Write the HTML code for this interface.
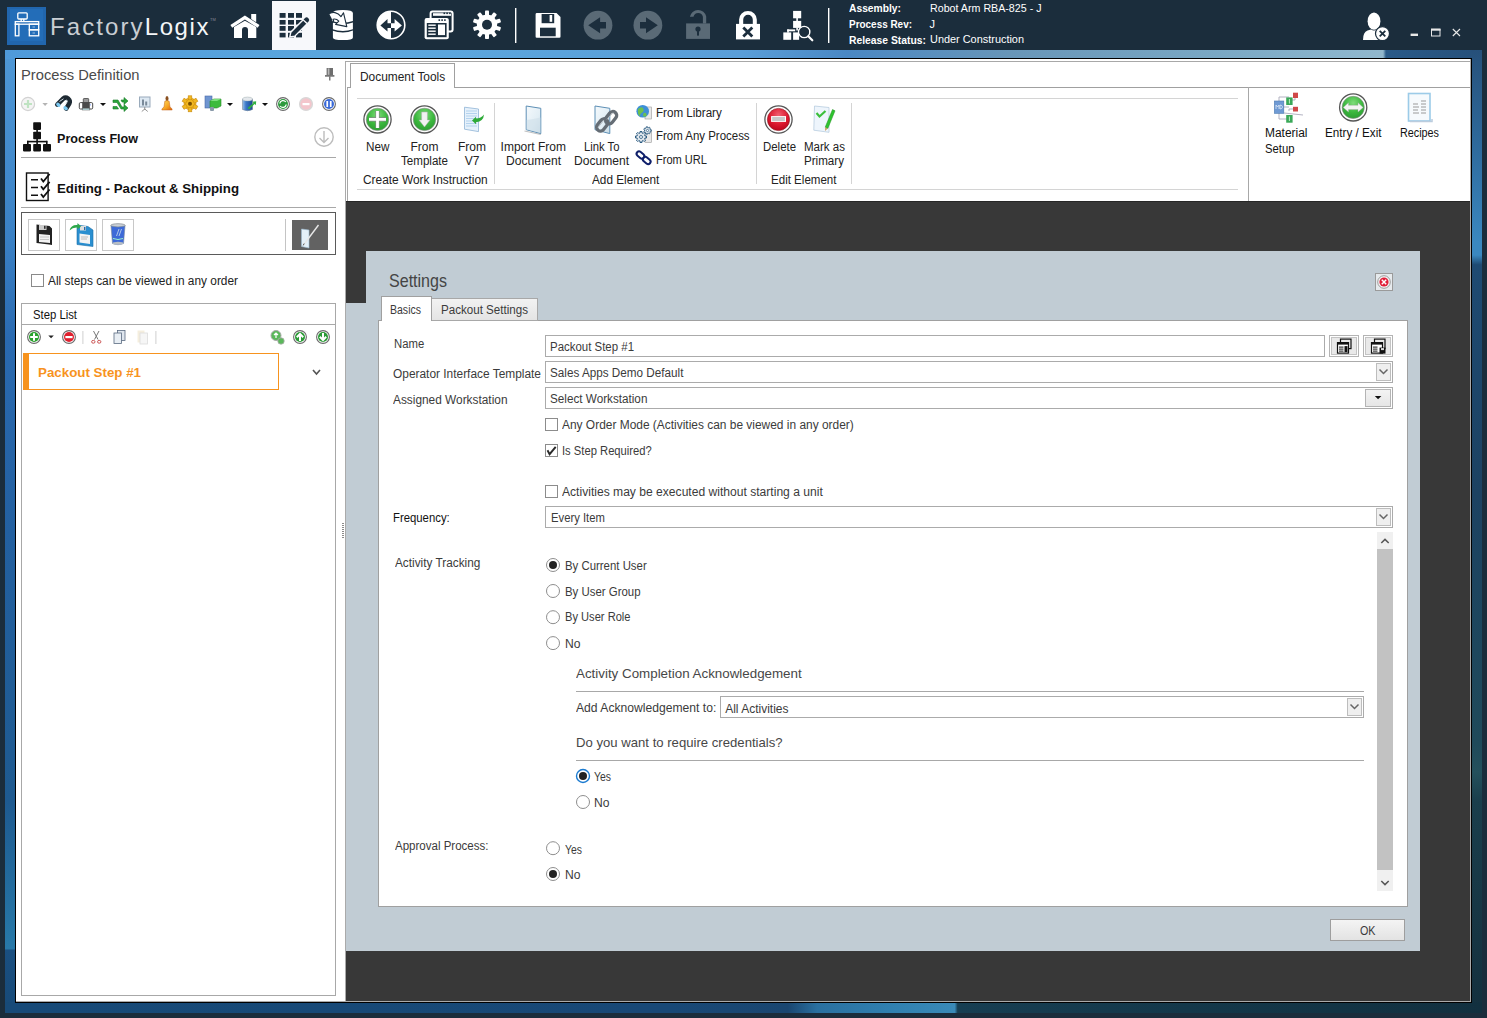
<!DOCTYPE html>
<html><head><meta charset="utf-8">
<style>
*{margin:0;padding:0;box-sizing:border-box}
html,body{width:1487px;height:1018px;overflow:hidden;background:#1b2d3c;font-family:"Liberation Sans",sans-serif;font-size:12px;color:#333;position:relative}
.a{position:absolute}
.t{position:absolute;white-space:nowrap;line-height:1}
svg{position:absolute;overflow:visible}
</style></head><body>
<div class="a" style="left:5px;top:50px;width:1477px;height:963px;background:#1d5388"></div>
<div class="a" style="left:5px;top:50px;width:10px;height:963px;background:linear-gradient(180deg,#4f98d6 0%,#3a80c4 20%,#2a6ab0 30%,#2360a0 50%,#1e5a90 78%,#2676a6 92%,#2878a8 93.3%,#1a4f80 93.5%,#174a78 100%)"></div>
<div class="a" style="left:5px;top:50px;width:1477px;height:9px;background:linear-gradient(90deg,#4f9ada 0%,#5ca8de 25%,#5a9ed8 50%,#4a88c4 57%,#6896b8 68%,#7aa8c4 82%,#8ab4cc 90%,#92b8cd 93.3%,#2a5a88 93.5%,#26507a 100%)"></div>
<div class="a" style="left:1471px;top:50px;width:11px;height:963px;background:linear-gradient(180deg,#26507a 0%,#2e6a9c 10%,#3a88c0 20%,#3a88c0 21.3%,#1e4a72 22.3%,#1c4262 46%,#1f4a5a 72%,#24505c 75%,#1a3e4c 78%,#14303e 100%)"></div>
<div class="a" style="left:5px;top:1002px;width:1477px;height:11px;background:linear-gradient(90deg,#174a78 0%,#184876 45%,#1a4670 53%,#2a70a0 55%,#3080b0 60%,#3a8ab8 64.3%,#173e52 64.5%,#14384a 80%,#12303f 100%)"></div>
<div class="a" style="left:15px;top:58px;width:1457px;height:945px;border:1px solid #000;background:#383838"></div>
<div class="a" style="left:16px;top:59px;width:1455px;height:943px;border-right:1px solid #aaa;border-bottom:1px solid #aaa"></div>
<div class="a" style="left:16px;top:59px;width:330px;height:942px;background:#fff"></div>
<div class="a" style="left:345px;top:61px;width:1px;height:940px;background:#aaa"></div>
<!-- TOPBAR -->
<div class="a" style="left:7px;top:7px;width:39px;height:38px;background:#2166ae"></div>
<div class="a" style="left:10px;top:9px;width:33px;height:32px;background:#236db8"></div>
<svg style="left:0;top:0" width="60" height="50">
 <g fill="none" stroke="#fff" stroke-width="1.3">
  <rect x="17.8" y="12.8" width="9.4" height="6.2" rx="1"/>
  <path d="M21.2 19v2.3M23.8 19v2.3"/>
  <rect x="15.3" y="21.6" width="23.4" height="2.6"/>
  <rect x="15.3" y="24.2" width="3.6" height="11.6"/>
  <rect x="29.3" y="24.2" width="9.4" height="5.6"/>
  <rect x="29.3" y="29.8" width="9.4" height="6"/>
 </g>
 <path d="M32.5 27h2.5M32.5 33h2.5" stroke="#fff" stroke-width="0.8" opacity=".7"/>
</svg>
<div class="t" style="left:50px;top:15px;font-size:24px;color:#c9ced3;letter-spacing:2.1px;font-weight:400"><span>Factory</span><span style="color:#f4f6f8;letter-spacing:1.6px">Logix</span></div>
<div class="t" style="left:210px;top:18px;font-size:4px;color:#889">TM</div>
<!-- home -->
<svg style="left:0;top:0" width="1487" height="50">
 <path d="M230.4 25.1 L244.9 15.5 L259.5 25.1 L257.7 27.8 L244.9 19.4 L232.2 27.8Z" fill="#fff"/>
 <path d="M251.2 13.9 H256.2 V22.3 L251.2 19Z" fill="#fff"/>
 <path d="M234 27 L244.9 20.8 L256.3 27 V37.9 H248 V30 A3 3 0 0 0 242 30 V37.9 H234Z" fill="#fff"/>
 <!-- selected tab -->
 <rect x="272" y="1" width="44" height="49" fill="#f7f8fb"/>
 <g fill="#1c2e3d">
  <rect x="279.6" y="13" width="6" height="4.8"/><rect x="288" y="13" width="6" height="4.8"/><rect x="296" y="13" width="6" height="4.8"/>
  <rect x="279.6" y="20" width="6" height="4.6"/><rect x="288" y="20" width="6" height="4.6"/><rect x="296" y="20" width="6" height="4.6"/>
  <rect x="279.6" y="26" width="6" height="4.8"/><rect x="288" y="26" width="6" height="4.8"/><rect x="296" y="26" width="6" height="4.8"/>
  <rect x="279.6" y="32.8" width="6" height="4.6"/><rect x="288" y="32.8" width="6" height="4.6"/><rect x="296" y="32.8" width="6" height="4.6"/>
 </g>
 <path d="M289.8 37 L290.8 32.2 L303.2 19.8 L307.2 23.8 L294.8 36.2Z" fill="#1c2e3d" stroke="#f7f8fb" stroke-width="1.4"/>
 <path d="M303.6 19.4 L304.8 18.2 A2.2 2.2 0 0 1 308.4 21.8 L307.4 22.8Z" fill="#1c2e3d"/>
 <!-- db -->
 <g fill="#fff">
  <path d="M332.9 13 Q332.9 10.1 342.9 10.1 Q352.9 10.1 352.9 13 V21 Q348 22.8 342.9 22.8 Q336 22.8 332.9 21Z"/>
  <path d="M332.9 22.6 Q337 24.2 342.9 24.2 Q348.5 24.2 352.9 22.4 V29.2 Q348 31 342.9 31 Q337 31 332.9 29.2Z"/>
  <path d="M332.9 30.8 Q337 32.6 342.9 32.6 Q348.5 32.6 352.9 30.6 V37.4 Q352.9 40 342.9 40 Q332.9 40 332.9 37.4Z"/>
 </g>
 <path d="M328.8 14.2 Q330.5 12 335 12.6 Q338.5 13.2 341 16.6 L343.5 12.8 L346.8 26.6 L335.6 24.4 L338.8 21.2 Q336.5 18.5 333 19.2 Q334.5 21.5 332.6 22.6 Q331.5 18.5 328.8 14.2Z" fill="#fff" stroke="#1c2e3d" stroke-width="1.1" stroke-linejoin="round"/>
 <!-- circle arrows -->
 <circle cx="391" cy="25" r="13.8" fill="#1c2e3d" stroke="#fff" stroke-width="1.6"/>
 <path d="M391 11.2 A13.8 13.8 0 0 0 391 38.8Z" fill="#fff"/>
 <path d="M380.4 25.4 L387.5 18.9 V23.2 H391 V28 H387.5 V31.6Z" fill="#1c2e3d"/>
 <path d="M401.9 25.4 L394.6 18.9 V23.2 H391 V28 H394.6 V31.6Z" fill="#fff"/>
 <!-- windows -->
 <rect x="430.6" y="11.5" width="22" height="20" rx="2" fill="none" stroke="#fff" stroke-width="2"/>
 <path d="M433 14.5h18" stroke="#fff" stroke-width="2.6"/>
 <rect x="424.6" y="18" width="24.2" height="21.3" rx="2" fill="#fff"/>
 <rect x="426.8" y="23" width="19.8" height="14.2" fill="#1c2e3d"/>
 <g fill="#fff"><rect x="428.3" y="24.5" width="7.4" height="1.4"/><rect x="428.3" y="27.5" width="7.4" height="1.4"/><rect x="428.3" y="30.5" width="7.4" height="1.4"/><rect x="428.3" y="33.5" width="7.4" height="1.4"/><rect x="438" y="24.5" width="7" height="10.6"/></g>
 <g fill="#1c2e3d"><rect x="438.5" y="19.3" width="1.6" height="1.6"/><rect x="441.3" y="19.3" width="1.6" height="1.6"/><rect x="444.1" y="19.3" width="1.6" height="1.6"/></g>
 <g fill="#1c2e3d"><rect x="443.5" y="12.5" width="1.6" height="1.6"/><rect x="446.3" y="12.5" width="1.6" height="1.6"/><rect x="449.1" y="12.5" width="1.6" height="1.6"/></g>
 <!-- gear -->
 <g transform="translate(487,24.8)" fill="#fff">
  <circle r="10.2"/>
  <g id="teeth"><rect x="-2" y="-14.2" width="4" height="6" rx="0.8"/></g>
  <rect x="-2" y="-14.2" width="4" height="6" rx="0.8" transform="rotate(36)"/>
  <rect x="-2" y="-14.2" width="4" height="6" rx="0.8" transform="rotate(72)"/>
  <rect x="-2" y="-14.2" width="4" height="6" rx="0.8" transform="rotate(108)"/>
  <rect x="-2" y="-14.2" width="4" height="6" rx="0.8" transform="rotate(144)"/>
  <rect x="-2" y="-14.2" width="4" height="6" rx="0.8" transform="rotate(180)"/>
  <rect x="-2" y="-14.2" width="4" height="6" rx="0.8" transform="rotate(216)"/>
  <rect x="-2" y="-14.2" width="4" height="6" rx="0.8" transform="rotate(252)"/>
  <rect x="-2" y="-14.2" width="4" height="6" rx="0.8" transform="rotate(288)"/>
  <rect x="-2" y="-14.2" width="4" height="6" rx="0.8" transform="rotate(324)"/>
  <circle r="5" fill="#1c2e3d"/>
 </g>
 <rect x="515" y="8" width="1.4" height="35" fill="#fff"/>
 <!-- save -->
 <path d="M536.5 13 H556.5 L560.5 17 V36.5 A1.2 1.2 0 0 1 559.3 37.8 H536.8 A1.2 1.2 0 0 1 535.6 36.5 V14.2 A1.2 1.2 0 0 1 536.5 13Z" fill="#fff"/>
 <rect x="541.6" y="14" width="12.6" height="9.2" fill="#1c2e3d"/>
 <rect x="549.6" y="15" width="2.6" height="6.8" fill="#fff"/>
 <rect x="540" y="27.7" width="15.7" height="8.6" fill="#1c2e3d"/>
 <!-- back/forward -->
 <circle cx="598" cy="25.2" r="14.4" fill="#5a6a76"/>
 <path d="M588.2 25.2 L600.1 17.2 V22.1 H606 V28.4 H600.1 V33.2Z" fill="#1c2e3d"/>
 <circle cx="647.9" cy="25.2" r="14.4" fill="#5a6a76"/>
 <path d="M657.8 25.2 L646 17.2 V22.1 H640 V28.4 H646 V33.2Z" fill="#1c2e3d"/>
 <!-- open lock -->
 <rect x="686.1" y="23.4" width="23.9" height="15.5" fill="#5a6a76"/>
 <path d="M689.9 16.8 H693.5 A4.8 4.8 0 0 1 702.9 16.8 V23.5 H706.2 V16.6 A8.3 8.3 0 0 0 689.9 16.8Z" fill="#5a6a76"/>
 <circle cx="698" cy="29" r="2.6" fill="#1c2e3d"/><rect x="697" y="29" width="2" height="6.6" fill="#1c2e3d"/>
 <!-- lock x -->
 <rect x="736" y="23.9" width="24" height="15.5" fill="#fff"/>
 <path d="M739.1 24 V19.4 A8.85 8.5 0 0 1 756.8 19.4 V24 H752.8 V19.8 A4.8 5 0 0 0 743.2 19.8 V24Z" fill="#fff"/>
 <path d="M743.3 27.5 L752.3 36.5 M752.3 27.5 L743.3 36.5" stroke="#1c2e3d" stroke-width="2.8"/>
 <!-- hierarchy search -->
 <g fill="#fff">
  <rect x="793.1" y="10.9" width="8.1" height="7.4"/>
  <rect x="796.3" y="18" width="1.6" height="3"/>
  <rect x="793.1" y="20.9" width="8.1" height="7"/>
  <rect x="796.3" y="27.5" width="1.6" height="3"/>
  <rect x="787.2" y="29.4" width="8" height="1.9"/>
  <rect x="787.2" y="29.4" width="1.6" height="3.2"/>
  <rect x="783.3" y="32.4" width="7.9" height="7.4"/>
  <rect x="793.1" y="32.4" width="6" height="7.4"/>
 </g>
 <circle cx="804.2" cy="32" r="5.6" fill="#1c2e3d" stroke="#fff" stroke-width="1.5"/>
 <circle cx="804.2" cy="32" r="4.2" fill="none" stroke="#1c2e3d" stroke-width="1.2"/>
 <path d="M808.3 36.2 L812.3 40.3" stroke="#fff" stroke-width="2.2" stroke-linecap="round"/>
 <rect x="828" y="8" width="1.4" height="35" fill="#fff"/>
 <!-- user -->
 <ellipse cx="1374" cy="21.2" rx="6.4" ry="8.6" fill="#fff"/>
 <path d="M1363 40 Q1363 32 1367.5 30.5 L1371 29.5 Q1374 31.5 1377 29.5 L1382 31 L1382 40Z" fill="#fff"/>
 <circle cx="1382.5" cy="33.6" r="7" fill="#fff" stroke="#1c2e3d" stroke-width="1.2"/>
 <path d="M1379.7 30.8 L1385.3 36.4 M1385.3 30.8 L1379.7 36.4" stroke="#1c2e3d" stroke-width="1.8"/>
 <!-- window controls -->
 <rect x="1410.6" y="33.6" width="7.4" height="2.4" fill="#e8e8e8"/>
 <rect x="1431.5" y="29.2" width="8.5" height="6.8" fill="none" stroke="#e8e8e8" stroke-width="1"/>
 <rect x="1431" y="28.7" width="9.5" height="2" fill="#e8e8e8"/>
 <path d="M1452.8 29 L1460 36 M1460 29 L1452.8 36" stroke="#e8e8e8" stroke-width="1.1"/>
</svg>

<svg style="left:0;top:0" width="346" height="400">
 <rect x="326.6" y="68" width="6.4" height="7.2" fill="#6e6e6e"/><rect x="327.8" y="68.4" width="1.6" height="6.4" fill="#b8b8b8"/>
 <rect x="325" y="75.2" width="9.4" height="1.4" fill="#5a5a5a"/><rect x="329.2" y="76.5" width="1.2" height="4" fill="#5a5a5a"/>
 <!-- toolbar -->
 <circle cx="28" cy="104" r="6.6" fill="#f4f4f4" stroke="#d2d2d2" stroke-width="1.2"/>
 <path d="M28 100v8M24 104h8" stroke="#bfe3c2" stroke-width="2.2"/>
 <path d="M42.4 103h5.4l-2.7 3z" fill="#b4b4b4"/>
 <path d="M57.3 104.6 L63.2 98.6 Q65.5 96.8 68.2 98.6 Q70.6 100.8 69.3 103.5 L66.2 108.6" fill="none" stroke="#1e2a33" stroke-width="4.6" stroke-linecap="round" stroke-linejoin="round"/>
 <path d="M59.5 101.5 L63.5 98.8 M66 99.8 L68 101.5 M65.8 103.5 L67 102" stroke="#c8d4dc" stroke-width="1" fill="none"/>
 <ellipse cx="58.3" cy="104.8" rx="2.4" ry="1.8" transform="rotate(45 58.3 104.8)" fill="#7cc8f0"/>
 <ellipse cx="65.6" cy="108.2" rx="2.4" ry="1.8" transform="rotate(30 65.6 108.2)" fill="#7cc8f0"/>
 <g transform="translate(79,98)">
  <rect x="4.3" y="0.5" width="5.4" height="5" rx=".8" fill="#9a9a9a" stroke="#444" stroke-width=".8"/>
  <rect x="0.3" y="4.6" width="13.4" height="6.4" rx="1.2" fill="#fff" stroke="#333" stroke-width=".9"/>
  <rect x="3.2" y="4.4" width="7.6" height="6.8" fill="#4a4a4a"/>
  <rect x="3.2" y="10.2" width="7.6" height="1.8" fill="#c8f0f4" stroke="#555" stroke-width=".5"/>
  <rect x="11" y="6.5" width=".8" height=".8" fill="#36f"/>
 </g>
 <path d="M100 103h6l-3 3z" fill="#111"/>
 <g transform="translate(113,97)" fill="#2aa53a" stroke="#1a7a28" stroke-width=".6">
  <path d="M0 3 H5 L9 10 H11 V7.5 L15 11 L11 14.5 V12 H8 L4 5.5 H0Z"/>
  <path d="M0 9.5 H4 L5.5 12 H0Z"/><path d="M8 3 H11 V0.5 L15 4 L11 7.5 V5 H9Z"/>
 </g>
 <g transform="translate(139,96.5)">
  <rect x="0.5" y="0.5" width="10.5" height="10" fill="#dde8f2" stroke="#9ab" stroke-width="1"/>
  <rect x="3" y="3" width="2" height="6" fill="#7a8a9a"/><rect x="6.2" y="5" width="2" height="4" fill="#7a8a9a"/>
  <path d="M5.75 10.5v3M5.75 12.5l-3 2.5M5.75 12.5l3 2.5" stroke="#888" stroke-width=".9"/>
 </g>
 <g transform="translate(162,96)">
  <defs><linearGradient id="bellG" x1="0" y1="0" x2="1" y2="1"><stop offset="0" stop-color="#ffe060"/><stop offset=".6" stop-color="#f5a020"/><stop offset="1" stop-color="#d86010"/></linearGradient></defs>
  <ellipse cx="5" cy="2.6" rx="1.5" ry="2.6" fill="#8a5020"/>
  <path d="M2.8 5.2 Q5 4 7.2 5.2 L8 11 Q10.4 12.5 10.2 14 H-0.2 Q-0.4 12.5 2 11Z" fill="url(#bellG)" stroke="#c06018" stroke-width=".5"/>
 </g>
 <g transform="translate(190,103.8)">
  <g fill="#f2b820" stroke="#c98a10" stroke-width=".6">
   <circle r="6"/>
   <rect x="-1.8" y="-8" width="3.6" height="4" transform="rotate(0)"/><rect x="-1.8" y="-8" width="3.6" height="4" transform="rotate(60)"/><rect x="-1.8" y="-8" width="3.6" height="4" transform="rotate(120)"/><rect x="-1.8" y="-8" width="3.6" height="4" transform="rotate(180)"/><rect x="-1.8" y="-8" width="3.6" height="4" transform="rotate(240)"/><rect x="-1.8" y="-8" width="3.6" height="4" transform="rotate(300)"/>
  </g>
  <circle r="2" fill="#7a5000"/>
 </g>
 <g transform="translate(205,96)">
  <rect x="0" y="0" width="7" height="12" fill="#6f95d0" stroke="#4a6aa8" stroke-width=".6"/>
  <path d="M5 5 L9 3 H16 V10 L12 12 H5Z" fill="#3dbb3d" stroke="#2a8a2a" stroke-width=".6"/>
  <path d="M5 5 L9 3 H16 L12 5Z" fill="#7ee07e"/>
  <rect x="5" y="11" width="4" height="4" rx="1" fill="#8a9aaa"/>
 </g>
 <path d="M227 103h6l-3 3z" fill="#111"/>
 <g transform="translate(242,96.5)">
  <defs><linearGradient id="dbG" x1="0" y1="0" x2="1" y2="0"><stop offset="0" stop-color="#9ac0e8"/><stop offset=".35" stop-color="#3a78c8"/><stop offset="1" stop-color="#1a4a90"/></linearGradient></defs>
  <path d="M0.5 2.5 Q5.5 0 10.5 2.5 V13 Q5.5 15.5 0.5 13Z" fill="url(#dbG)" stroke="#6a7a8a" stroke-width=".5"/>
  <ellipse cx="5.5" cy="2.5" rx="5" ry="2" fill="#e4e8ec" stroke="#9aa" stroke-width=".4"/>
  <path d="M5.5 11.5 L11.5 6.5 L10.3 5.2 L14.2 4.8 L13.8 8.7 L12.6 7.5 L7 12.8Z" fill="#30b040"/>
 </g>
 <path d="M262 103h6l-3 3z" fill="#111"/>
 <circle cx="283" cy="104" r="6.4" fill="#fff" stroke="#6a6a6a" stroke-width="1.1"/><circle cx="283" cy="104" r="5" fill="#2e9a3e"/>
 <path d="M279.8 103.5 A3.3 3.3 0 0 1 285.8 102 M286.2 104.5 A3.3 3.3 0 0 1 280.2 106" stroke="#fff" stroke-width="1.3" fill="none"/>
 <circle cx="306" cy="104" r="6.4" fill="#f3c6cc" stroke="#d8d8d8" stroke-width="1.4"/>
 <rect x="302.5" y="103" width="7" height="2.2" fill="#fff"/>
 <circle cx="329" cy="104" r="6.4" fill="#fff" stroke="#6a6a6a" stroke-width="1.1"/><circle cx="329" cy="104" r="5" fill="#3a6ad8"/>
 <rect x="326.4" y="101" width="1.7" height="6" fill="#fff"/><rect x="329.9" y="101" width="1.7" height="6" fill="#fff"/>
 <!-- process flow icon -->
 <g fill="#111">
  <rect x="33.2" y="122.3" width="7.8" height="7.6" rx=".8"/>
  <rect x="33.2" y="131.7" width="7.8" height="7.6" rx=".8"/>
  <rect x="36.3" y="129" width="1.6" height="3"/>
  <rect x="36.3" y="139" width="1.6" height="2"/>
  <rect x="27" y="140.8" width="20.2" height="1.6"/>
  <rect x="27" y="140.8" width="1.6" height="3.5"/><rect x="46" y="140.8" width="1.6" height="3.5"/><rect x="36.3" y="140.8" width="1.6" height="3.5"/>
  <rect x="23" y="144" width="8" height="7.4" rx=".8"/>
  <rect x="33.2" y="144" width="7.8" height="7.4" rx=".8"/>
  <rect x="43" y="144" width="8" height="7.4" rx=".8"/>
 </g>
 <circle cx="324" cy="137" r="9.2" fill="none" stroke="#bdbdbd" stroke-width="1.4"/>
 <path d="M324 131v11.5M319.5 138l4.5 4.5 4.5-4.5" fill="none" stroke="#bdbdbd" stroke-width="1.4"/>
 <!-- checklist icon -->
 <rect x="26.5" y="173" width="21.6" height="27.5" fill="#fff" stroke="#111" stroke-width="1.4"/>
 <g stroke="#111" stroke-width="1.6" fill="none">
  <path d="M31 179.7h7M31 187.5h7M31 195.2h7"/>
  <path d="M41 178.5l2.3 3 6.3-7.5M41 186.3l2.3 3 6.3-7.5M41 194l2.3 3 6.3-7.5" stroke-width="1.8"/>
 </g>
</svg>
<div class="a" style="left:21px;top:157px;width:315px;height:1px;background:#a8a8a8"></div>
<div class="a" style="left:21px;top:207px;width:315px;height:1px;background:#a8a8a8"></div>
<div class="a" style="left:21px;top:212px;width:315px;height:43px;border:1px solid #5a5a5a"></div>
<div class="a" style="left:28px;top:219px;width:32px;height:32px;border:1px solid #c8c8c8;background:#fff"></div>
<div class="a" style="left:65px;top:219px;width:32px;height:32px;border:1px solid #c8c8c8;background:#fff"></div>
<div class="a" style="left:102px;top:219px;width:32px;height:32px;border:1px solid #c8c8c8;background:#fff"></div>
<div class="a" style="left:285px;top:219px;width:1px;height:32px;background:#c4c4c4"></div>
<div class="a" style="left:292px;top:220px;width:36px;height:30px;background:#626262"></div>
<svg style="left:0;top:0" width="346" height="300">
 <!-- floppy black -->
 <path d="M36.5 224.5 L49.5 226 L52 228.5 V245 L49 244.5 L36.5 243Z" fill="#222"/>
 <path d="M39 225 H46.5 V230 H39Z" fill="#ccc"/><rect x="44" y="225.8" width="1.6" height="3" fill="#333"/>
 <path d="M39 234 L50 235 V243 L39 242Z" fill="#f2f2f2"/>
 <path d="M40 237h9M40 239.5h9" stroke="#aaa" stroke-width=".6"/>
 <!-- floppy blue with arrow -->
 <path d="M77 225 L88 226.5 L93 230 V246.5 L77 244.5Z" fill="#2a8fd0" stroke="#1d6ea8" stroke-width=".6"/>
 <path d="M80 226 H86 V230.5 H80Z" fill="#ddd"/><rect x="84" y="227" width="1.4" height="3" fill="#2a6aa8"/>
 <path d="M79.5 233.5 L90 235 V244 L79.5 242.5Z" fill="#f4f4f4"/>
 <path d="M81 237h7M81 239h6" stroke="#999" stroke-width=".6"/>
 <path d="M69.5 230.5 Q71 224.5 77.5 225 L77.5 223 L81 226.5 L77.5 229.5 V227.5 Q73 227 69.5 230.5Z" fill="#2ea84a"/>
 <!-- trash -->
 <ellipse cx="118" cy="225.5" rx="7.3" ry="1.8" fill="#c9cfd6" stroke="#8a9097" stroke-width=".8"/>
 <path d="M111 226 L112.5 243.5 Q118 246 123.5 243.5 L125 226 Q118 228 111 226Z" fill="#3d6ad8" stroke="#7a8a9a" stroke-width=".6"/>
 <path d="M116.5 236 L119 229 M119 236 L121.5 229" stroke="#cde" stroke-width=".8"/>
 <path d="M113 238.5 Q118 240.5 123 238.5" stroke="#9ec" stroke-width="1" fill="none"/>
 <ellipse cx="118" cy="243.3" rx="5.3" ry="1.5" fill="#b8bec4"/>
 <!-- edit doc on dark -->
 <path d="M301.5 229 L309 230 V248 L301.5 246.5Z" fill="#e4f0f8" stroke="#9ab8cf" stroke-width=".6"/>
 <path d="M303.5 245 L318.5 225" stroke="#e8e8e8" stroke-width="1.4"/>
 <path d="M303.2 245.4 L304.2 243.5" stroke="#555" stroke-width="1"/>
</svg>
<div class="a" style="left:31px;top:274px;width:13px;height:13px;border:1px solid #8a8a8a;background:#fff"></div>
<div class="a" style="left:21px;top:303px;width:315px;height:693px;border:1px solid #a8a8a8"></div>
<div class="a" style="left:21px;top:324px;width:315px;height:1px;background:#a8a8a8"></div>
<svg style="left:0;top:0" width="346" height="400">
 <circle cx="34" cy="337" r="6.4" fill="#fff" stroke="#6a6a6a" stroke-width="1.1"/><circle cx="34" cy="337" r="5" fill="#2aa02e"/>
 <path d="M34 333.2v7.6M30.2 337h7.6" stroke="#fff" stroke-width="2"/>
 <path d="M48.3 335.4h5.5l-2.75 2.8z" fill="#222"/>
 <circle cx="69" cy="337" r="6.4" fill="#fff" stroke="#6a6a6a" stroke-width="1.1"/><circle cx="69" cy="337" r="5" fill="#e0202e"/>
 <rect x="65.4" y="336" width="7.2" height="2.2" fill="#fff"/>
 <rect x="82.4" y="331" width="1" height="13" fill="#d0d0d0"/>
 <path d="M93.5 331 L98 339.5 M99 331 L94.5 339.5" stroke="#777" stroke-width="1"/>
 <ellipse cx="93.3" cy="341.8" rx="1.7" ry="1.4" fill="none" stroke="#c55" stroke-width="1"/><ellipse cx="99.2" cy="341.8" rx="1.7" ry="1.4" fill="none" stroke="#c55" stroke-width="1"/>
 <rect x="117.5" y="330.5" width="7.5" height="10" fill="#dfe6ee" stroke="#5a6a80" stroke-width=".8"/>
 <rect x="114" y="333" width="7.5" height="10.5" fill="#e8eef4" stroke="#5a6a80" stroke-width=".8"/>
 <rect x="137.5" y="330.5" width="7" height="12" fill="#f3ead6" opacity=".8"/>
 <rect x="140" y="333" width="7.5" height="11" fill="#f6f6f6" stroke="#ddd" stroke-width=".8"/>
 <rect x="155.4" y="331" width="1" height="13" fill="#d0d0d0"/>
 <circle cx="276" cy="335.5" r="5" fill="#5ab85a" stroke="#aaa" stroke-width="1"/><path d="M276 333v5M274 335l2-2 2 2" stroke="#fff" stroke-width="1.2" fill="none"/>
 <circle cx="281" cy="341" r="3.2" fill="#5ab85a" stroke="#aaa" stroke-width=".8"/>
 <circle cx="300" cy="337" r="6.4" fill="#fff" stroke="#6a6a6a" stroke-width="1.1"/><circle cx="300" cy="337" r="5" fill="#2a9a36"/>
 <path d="M300 341v-7M296.8 337.2l3.2-3.2 3.2 3.2" stroke="#fff" stroke-width="2" fill="none"/>
 <circle cx="323" cy="337" r="6.4" fill="#fff" stroke="#6a6a6a" stroke-width="1.1"/><circle cx="323" cy="337" r="5" fill="#2a9a36"/>
 <path d="M323 333v7M319.8 336.8l3.2 3.2 3.2-3.2" stroke="#fff" stroke-width="2" fill="none"/>
 <path d="M313 370 L316.5 374 L320 370" stroke="#555" stroke-width="1.6" fill="none"/>
 <!-- grip -->
 <g fill="#8a8a8a"><rect x="342" y="523" width="2" height="1"/><rect x="342" y="525" width="2" height="1"/><rect x="342" y="527" width="2" height="1"/><rect x="342" y="529" width="2" height="1"/><rect x="342" y="531" width="2" height="1"/><rect x="342" y="533" width="2" height="1"/><rect x="342" y="535" width="2" height="1"/><rect x="342" y="537" width="2" height="1"/></g>
</svg>
<div class="a" style="left:23px;top:353px;width:256px;height:37px;border:1px solid #f7931e;border-left:6px solid #f7931e;background:#fff"></div>
<div class="a" style="left:346px;top:59px;width:1124px;height:142px;background:#fff"></div>
<div class="a" style="left:345px;top:61px;width:1125px;height:1px;background:#a8a8a8"></div>
<div class="a" style="left:350px;top:63px;width:105px;height:25px;border:1px solid #a0a0a0;border-bottom:none;background:#fff"></div>
<div class="a" style="left:347px;top:87px;width:1px;height:114px;background:#a8a8a8"></div>
<div class="a" style="left:347px;top:87px;width:4px;height:1px;background:#a0a0a0"></div>
<div class="a" style="left:454px;top:87px;width:1016px;height:1px;background:#a0a0a0"></div>
<div class="a" style="left:357px;top:98px;width:881px;height:1px;background:#d4d4d4"></div>
<div class="a" style="left:357px;top:189px;width:881px;height:1px;background:#d4d4d4"></div>
<div class="a" style="left:494px;top:103px;width:1px;height:81px;background:#d4d4d4"></div>
<div class="a" style="left:756px;top:103px;width:1px;height:81px;background:#d4d4d4"></div>
<div class="a" style="left:851px;top:103px;width:1px;height:81px;background:#d4d4d4"></div>
<div class="a" style="left:1248px;top:87px;width:1px;height:114px;background:#a8a8a8"></div>
<div class="a" style="left:346px;top:201px;width:1124px;height:1px;background:#262626"></div>
<svg style="left:0;top:0" width="1487" height="200">
 <defs>
  <radialGradient id="gG" cx=".5" cy=".3" r=".75"><stop offset="0" stop-color="#7fdc7a"/><stop offset=".55" stop-color="#3cb83e"/><stop offset="1" stop-color="#2a9a30"/></radialGradient>
  <radialGradient id="gR" cx=".5" cy=".3" r=".75"><stop offset="0" stop-color="#f06070"/><stop offset=".55" stop-color="#dd1a30"/><stop offset="1" stop-color="#b80018"/></radialGradient>
  <linearGradient id="gDoc" x1="0" y1="0" x2="1" y2="1"><stop offset="0" stop-color="#f4f9fc"/><stop offset=".6" stop-color="#e2eef5"/><stop offset="1" stop-color="#c8dbe6"/></linearGradient>
 </defs>
 <!-- New -->
 <circle cx="377.5" cy="119.4" r="13.6" fill="#fff" stroke="#555" stroke-width="1.3"/>
 <circle cx="377.5" cy="119.4" r="11.2" fill="url(#gG)" stroke="#888" stroke-width=".6"/>
 <path d="M377.5 111v17M369 119.4h17" stroke="#888" stroke-width="4.2"/>
 <path d="M377.5 111v17M369 119.4h17" stroke="#fff" stroke-width="2.8"/>
 <!-- From template -->
 <circle cx="424.5" cy="119.4" r="13.6" fill="#fff" stroke="#555" stroke-width="1.3"/>
 <circle cx="424.5" cy="119.4" r="11.2" fill="url(#gG)" stroke="#888" stroke-width=".6"/>
 <path d="M421.6 112 H427.4 V120 H430 L424.5 127 L419 120 H421.6Z" fill="#f2f2f2" stroke="#aaa" stroke-width=".5"/>
 <!-- From V7 -->
 <path d="M464.5 107.2 L478.5 109 V131.6 L464.5 129.2Z" fill="#e6f1fb" stroke="#8fb4d6" stroke-width=".8"/>
 <g stroke="#9cc4e8" stroke-width=".7"><path d="M466 111h11M466 113.5h11M466 116h11M466 118.5h11M466 121h11M466 123.5h11M466 126h11"/></g>
 <path d="M472 120.5 L476 116.8 V118.6 Q481 118.6 484 114.5 Q483.5 121.5 476 122.2 V124.2Z" fill="#2eaa38"/>
 <!-- Import doc -->
 <path d="M526.2 106 L540.8 108.3 V133.6 L526.2 129.7Z" fill="url(#gDoc)" stroke="#5d8fb5" stroke-width="1"/>
 <path d="M526.5 120 Q533 119 540.5 117.5 V133 L526.5 129.5Z" fill="#cfe0ea" opacity=".6"/>
 <path d="M524.5 131 L540.8 134.5" stroke="#999" stroke-width="1.2" opacity=".6"/>
 <!-- Link doc -->
 <path d="M595 106 L609.8 108.3 V133.6 L595 129.7Z" fill="url(#gDoc)" stroke="#5d8fb5" stroke-width="1"/>
 <g fill="none" stroke="#656d75" stroke-width="3.3">
  <rect x="595.5" y="121" width="13.5" height="7.8" rx="3.9" transform="rotate(-52 602.25 124.9)"/>
  <rect x="604.3" y="113.8" width="13.5" height="7.8" rx="3.9" transform="rotate(-52 611 117.7)"/>
 </g>
 <g fill="none" stroke="#aeb5bc" stroke-width=".9">
  <path d="M598 127.5 L604 120"/><path d="M607 119.5 L613 112.5"/>
 </g>
 <!-- small icons -->
 <rect x="645" y="107" width="6.5" height="12" fill="#e8e8e8" stroke="#999" stroke-width=".6"/>
 <circle cx="642.7" cy="111.3" r="6.3" fill="#3d8fd8"/>
 <path d="M638 109 Q641 106 643 108 Q645 111 641.5 113 Q639 115 640.5 117 Q637 114 638 109Z" fill="#6cc050"/>
 <path d="M643.5 113 Q647 112 646.5 116 Q645 117.5 643 116Z" fill="#6cc050"/>
 <rect x="645" y="130" width="6.5" height="12.5" fill="#e8e8e8" stroke="#999" stroke-width=".6"/>
 <path d="M645.09 136.04 L646.51 136.02 L646.51 137.98 L645.09 137.96 L644.57 139.22 L645.59 140.20 L644.20 141.59 L643.22 140.57 L641.96 141.09 L641.98 142.51 L640.02 142.51 L640.04 141.09 L638.78 140.57 L637.80 141.59 L636.41 140.20 L637.43 139.22 L636.91 137.960 L635.49 137.98 L635.49 136.02 L636.91 136.04 L637.43 134.78 L636.41 133.80 L637.80 132.41 L638.78 133.43 L640.04 132.91 L640.02 131.49 L641.98 131.49 L641.96 132.91 L643.22 133.43 L644.20 132.41 L645.59 133.80 L644.57 134.78Z" fill="#dfe6ec" stroke="#2a5a80" stroke-width="1"/>
 <circle cx="641" cy="137" r="1.5" fill="#fff" stroke="#2a5a80" stroke-width=".8"/>
 <path d="M650.30 129.75 L651.22 129.74 L651.22 131.26 L650.30 131.25 L649.83 132.22 L650.42 132.94 L649.23 133.89 L648.66 133.16 L647.61 133.40 L647.41 134.30 L645.93 133.96 L646.14 133.06 L645.30 132.39 L644.48 132.80 L643.82 131.43 L644.65 131.04 L644.65 129.96 L643.82 129.570 L644.48 128.20 L645.30 128.61 L646.14 127.94 L645.93 127.04 L647.41 126.70 L647.61 127.60 L648.66 127.84 L649.23 127.11 L650.42 128.06 L649.83 128.78Z" fill="#dfe6ec" stroke="#2a5a80" stroke-width=".9"/>
 <circle cx="647.5" cy="130.5" r="1.1" fill="#fff" stroke="#2a5a80" stroke-width=".7"/>
 <g fill="none" stroke="#0f1f6a" stroke-width="2">
  <rect x="636.2" y="152.5" width="8.5" height="5" rx="2.5" transform="rotate(40 640.5 155)"/>
  <rect x="642.5" y="158" width="8.5" height="5" rx="2.5" transform="rotate(40 646.7 160.5)"/>
 </g>
 <!-- Delete -->
 <circle cx="778.5" cy="119.5" r="13.6" fill="#fff" stroke="#555" stroke-width="1.3"/>
 <circle cx="778.5" cy="119.5" r="11.1" fill="url(#gR)" stroke="#8a1a20" stroke-width=".6"/>
 <rect x="771.1" y="116.1" width="14.9" height="5.8" fill="#fff"/>
 <rect x="772.2" y="117" width="12.7" height="4" fill="#c8c8c8"/>
 <!-- Mark as primary -->
 <path d="M814.5 106 L829 107.5 V132.3 L813.8 130.2Z" fill="#eef5fc" stroke="#b8cde0" stroke-width=".8"/>
 <path d="M816.5 113 L819.5 116.5 L825.5 111" stroke="#3cbf3c" stroke-width="2.2" fill="none"/>
 <path d="M825.2 127.2 L832.5 109.5 L835 110.8 L827.8 128.5Z" fill="#2ec42e" stroke="#1a8a1a" stroke-width=".5"/>
 <path d="M825.2 127.2 L827.8 128.5 L825 131Z" fill="#c8a060"/>
 <!-- Material setup -->
 <g stroke="#aab" stroke-width=".9" fill="none"><path d="M1279 101 V97 H1289 M1283 107 H1289 M1279 113 V119 H1289 M1292 100 H1295 V95 M1289 109 H1295 M1289 111 V109 M1284 113 L1303 115"/></g>
 <rect x="1274.4" y="101" width="9.4" height="12.3" fill="#6f9ad4" stroke="#4a78b0" stroke-width=".6"/><path d="M1276 105v4M1276 105l1.5 2 1.5-2v4M1280 105v4q2.5-.2 2.5-2t-2.5-2" stroke="#e8f0fa" stroke-width=".7" fill="none"/>
 <rect x="1286.2" y="97.4" width="6.4" height="7.6" fill="#3aa858"/><path d="M1289.4 99v4.5" stroke="#dfd" stroke-width=".8"/>
 <rect x="1286.2" y="115" width="6.4" height="7.7" fill="#3aa858"/><path d="M1289.4 116.5v4.5" stroke="#dfd" stroke-width=".8"/>
 <rect x="1293" y="92.7" width="5" height="5.3" fill="#d04848"/>
 <rect x="1293" y="106.8" width="5" height="4.7" fill="#d04848"/>
 <!-- Entry / Exit -->
 <circle cx="1353.2" cy="107.4" r="13.6" fill="#fff" stroke="#555" stroke-width="1.3"/>
 <circle cx="1353.2" cy="107.4" r="11.1" fill="url(#gG)" stroke="#888" stroke-width=".6"/>
 <path d="M1343.2 107.4 L1348.5 102.8 V105.3 H1358 V102.8 L1363.2 107.4 L1358 112 V109.5 H1348.5 V112Z" fill="#f4f4f4" stroke="#aaa" stroke-width=".4"/>
 <!-- Recipes -->
 <rect x="1408.5" y="93.5" width="21.5" height="27.5" fill="#f6fafd" stroke="#9ccbe8" stroke-width="1.6"/>
 <g stroke="#9a9a9a" stroke-width="1"><path d="M1413 104h5M1413 107h6M1413 110h5M1413 113h6M1421 101h5M1421 104h5M1421 107h5M1421 110h5M1421 113h5"/></g>
 <path d="M1410 121.5 H1432 V119" stroke="#bcd" stroke-width="1.5" fill="none"/>
</svg>
<div class="a" style="left:346px;top:303px;width:1074px;height:648px;background:#c1ccd4"></div>
<div class="a" style="left:366px;top:251px;width:1054px;height:700px;background:#c1ccd4"></div>
<div class="a" style="left:1375px;top:273px;width:18px;height:18px;border:1px solid #9a9a9a;background:#e6eaed"></div>
<svg style="left:0;top:0" width="1487" height="1018">
 <circle cx="1384" cy="282" r="6.3" fill="#f4f4f4" stroke="#888" stroke-width=".8"/>
 <circle cx="1384" cy="282" r="4.6" fill="#e0203a"/>
 <path d="M1381.8 279.8l4.4 4.4M1386.2 279.8l-4.4 4.4" stroke="#fff" stroke-width="1.5"/>
</svg>
<div class="a" style="left:378px;top:320px;width:1030px;height:587px;border:1px solid #a0a0a0;background:#fff"></div>
<div class="a" style="left:431px;top:298px;width:107px;height:23px;border:1px solid #a8a8a8;background:linear-gradient(#f2f2f2,#e4e4e4)"></div>
<div class="a" style="left:381px;top:296px;width:51px;height:25px;border:1px solid #a0a0a0;border-bottom:none;background:#fff"></div>
<div class="a" style="left:545px;top:335px;width:780px;height:22px;border:1px solid #ababab;background:#fff"></div>
<div class="a" style="left:545px;top:361px;width:848px;height:22px;border:1px solid #ababab;background:#fff"></div>
<div class="a" style="left:545px;top:387px;width:848px;height:22px;border:1px solid #ababab;background:#fff"></div>
<div class="a" style="left:1329px;top:335px;width:30px;height:22px;border:1px solid #b4b4b4;background:#fff"></div>
<div class="a" style="left:1331px;top:337px;width:26px;height:18px;border:1px solid #c4c4c4;background:#e9e9e9"></div>
<div class="a" style="left:1363px;top:335px;width:30px;height:22px;border:1px solid #b4b4b4;background:#fff"></div>
<div class="a" style="left:1365px;top:337px;width:26px;height:18px;border:1px solid #c4c4c4;background:#e9e9e9"></div>
<div class="a" style="left:1376px;top:363px;width:15px;height:18px;border:1px solid #bdbdbd;background:#efefef"></div>
<div class="a" style="left:1365px;top:389px;width:26px;height:18px;border:1px solid #b4b4b4;background:linear-gradient(#f3f3f3,#e6e6e6)"></div>
<svg style="left:0;top:0" width="1487" height="1018">
 <path d="M1379.5 369.5l4 4 4-4" fill="none" stroke="#666" stroke-width="1.5"/>
 <path d="M1374.8 396h6.6l-3.3 3.2z" fill="#111"/>
 <!-- window buttons icons -->
 <g transform="translate(1337,338.6)">
  <rect x="3.5" y="0.5" width="10.5" height="9.5" fill="none" stroke="#111" stroke-width="1.2"/>
  <rect x="0.5" y="4" width="11" height="10.5" fill="#fff" stroke="#111" stroke-width="1.2"/>
  <rect x="0.5" y="4" width="11" height="2" fill="#111"/>
  <path d="M2 8.5h4.5M2 10.5h4.5M2 12.5h4.5" stroke="#111" stroke-width="1"/>
  <rect x="7.5" y="7.5" width="3" height="6" fill="#111"/>
 </g>
 <g transform="translate(1371,338.6)">
  <rect x="3.5" y="0.5" width="10.5" height="9.5" fill="none" stroke="#111" stroke-width="1.2"/>
  <rect x="0.5" y="4" width="11" height="10.5" fill="#fff" stroke="#111" stroke-width="1.2"/>
  <rect x="0.5" y="4" width="11" height="2" fill="#111"/>
  <path d="M2 8.5h4.5M2 10.5h4.5M2 12.5h4.5" stroke="#111" stroke-width="1"/>
  <rect x="8.5" y="9" width="6" height="6" fill="#111"/><rect x="10" y="9.5" width="3" height="2" fill="#ddd"/>
 </g>
 <!-- checkboxes -->
 <rect x="545.5" y="418.5" width="12" height="12" fill="#fff" stroke="#8c8c8c" stroke-width="1"/>
 <rect x="545.5" y="444.5" width="12" height="12" fill="#fff" stroke="#8c8c8c" stroke-width="1"/>
 <path d="M547.5 450.2 L549.6 454.2 L555.7 446.8" fill="none" stroke="#2a2a2a" stroke-width="1.9"/>
 <rect x="545.5" y="485.5" width="12" height="12" fill="#fff" stroke="#8c8c8c" stroke-width="1"/>
</svg>
<div class="a" style="left:545px;top:506px;width:848px;height:22px;border:1px solid #ababab;background:#fff"></div>
<div class="a" style="left:1376px;top:508px;width:15px;height:18px;border:1px solid #bdbdbd;background:#efefef"></div>
<div class="a" style="left:1377px;top:532px;width:16px;height:17px;background:#f0f0f0"></div>
<div class="a" style="left:1377px;top:549px;width:16px;height:321px;background:#c2c2c2"></div>
<div class="a" style="left:1377px;top:870px;width:16px;height:21px;background:#f0f0f0"></div>
<svg style="left:0;top:0" width="1487" height="1018">
 <path d="M1379.5 514.5l4 4 4-4" fill="none" stroke="#666" stroke-width="1.5"/>
 <path d="M1381.3 543l3.7-3.6 3.7 3.6" fill="none" stroke="#555" stroke-width="1.5"/>
 <path d="M1381.3 881l3.7 3.6 3.7-3.6" fill="none" stroke="#555" stroke-width="1.5"/>
</svg>
<svg style="left:0;top:0" width="1487" height="1018"><circle cx="553" cy="565" r="6.5" fill="#fff" stroke="#8e8e8e" stroke-width="1"/><circle cx="553" cy="565" r="4" fill="#222"/><circle cx="553" cy="591" r="6.5" fill="#fff" stroke="#8e8e8e" stroke-width="1"/><circle cx="553" cy="617.2" r="6.5" fill="#fff" stroke="#8e8e8e" stroke-width="1"/><circle cx="553" cy="643.1" r="6.5" fill="#fff" stroke="#8e8e8e" stroke-width="1"/><circle cx="583" cy="776" r="6.5" fill="#fff" stroke="#1a7ad0" stroke-width="1.4"/><circle cx="583" cy="776" r="4" fill="#222"/><circle cx="583" cy="802" r="6.5" fill="#fff" stroke="#8e8e8e" stroke-width="1"/><circle cx="553" cy="848.2" r="6.5" fill="#fff" stroke="#8e8e8e" stroke-width="1"/><circle cx="553" cy="874" r="6.5" fill="#fff" stroke="#8e8e8e" stroke-width="1"/><circle cx="553" cy="874" r="4" fill="#222"/></svg>
<div class="a" style="left:576px;top:691px;width:788px;height:1px;background:#a8a8a8"></div>
<div class="a" style="left:720px;top:696px;width:644px;height:22px;border:1px solid #ababab;background:#fff"></div>
<div class="a" style="left:1347px;top:698px;width:15px;height:18px;border:1px solid #bdbdbd;background:#efefef"></div>
<svg style="left:0;top:0" width="1487" height="1018"><path d="M1350.5 704.5l4 4 4-4" fill="none" stroke="#666" stroke-width="1.5"/></svg>
<div class="a" style="left:576px;top:760px;width:788px;height:1px;background:#a8a8a8"></div>
<div class="a" style="left:1330px;top:919px;width:75px;height:22px;border:1px solid #9e9e9e;background:linear-gradient(#f4f4f4,#e3e3e3)"></div>
<div class="t" style="left:849.20px;top:3.31px;font-size:10.5px;font-weight:700;color:#fff;transform:scaleX(0.9791);transform-origin:0 0;">Assembly:</div>
<div class="t" style="left:849.20px;top:19.21px;font-size:10.5px;font-weight:700;color:#fff;transform:scaleX(0.9467);transform-origin:0 0;">Process Rev:</div>
<div class="t" style="left:849.20px;top:34.71px;font-size:10.5px;font-weight:700;color:#fff;transform:scaleX(0.9846);transform-origin:0 0;">Release Status:</div>
<div class="t" style="left:929.50px;top:2.89px;font-size:11px;font-weight:400;color:#fff;transform:scaleX(0.9701);transform-origin:0 0;">Robot Arm RBA-825 - J</div>
<div class="t" style="left:929.50px;top:18.79px;font-size:11px;font-weight:400;color:#fff;">J</div>
<div class="t" style="left:929.50px;top:34.29px;font-size:11px;font-weight:400;color:#fff;transform:scaleX(0.9918);transform-origin:0 0;">Under Construction</div>
<div class="t" style="left:20.60px;top:67.40px;font-size:15px;font-weight:400;color:#4a4a4a;transform:scaleX(0.9802);transform-origin:0 0;">Process Definition</div>
<div class="t" style="left:57.40px;top:132.10px;font-size:13px;font-weight:700;color:#111;transform:scaleX(0.9664);transform-origin:0 0;">Process Flow</div>
<div class="t" style="left:57.40px;top:182.40px;font-size:13px;font-weight:700;color:#111;transform:scaleX(1.0202);transform-origin:0 0;">Editing - Packout &amp; Shipping</div>
<div class="t" style="left:48.40px;top:275.24px;font-size:12px;font-weight:400;color:#222;transform:scaleX(0.9890);transform-origin:0 0;">All steps can be viewed in any order</div>
<div class="t" style="left:33.20px;top:308.74px;font-size:12px;font-weight:400;color:#111;transform:scaleX(0.9421);transform-origin:0 0;">Step List</div>
<div class="t" style="left:37.70px;top:365.70px;font-size:13px;font-weight:700;color:#f7931e;transform:scaleX(1.0255);transform-origin:0 0;">Packout Step #1</div>
<div class="t" style="left:359.50px;top:71.34px;font-size:12px;font-weight:400;color:#222;transform:scaleX(0.9927);transform-origin:0 0;">Document Tools</div>
<div class="t" style="left:365.80px;top:141.34px;font-size:12px;font-weight:400;color:#222;transform:scaleX(0.9744);transform-origin:0 0;">New</div>
<div class="t" style="left:410.50px;top:141.34px;font-size:12px;font-weight:400;color:#222;">From</div>
<div class="t" style="left:401.00px;top:154.84px;font-size:12px;font-weight:400;color:#222;transform:scaleX(0.9650);transform-origin:0 0;">Template</div>
<div class="t" style="left:458.00px;top:141.34px;font-size:12px;font-weight:400;color:#222;">From</div>
<div class="t" style="left:464.66px;top:154.84px;font-size:12px;font-weight:400;color:#222;">V7</div>
<div class="t" style="left:363.20px;top:174.14px;font-size:12px;font-weight:400;color:#222;transform:scaleX(0.9910);transform-origin:0 0;">Create Work Instruction</div>
<div class="t" style="left:500.55px;top:141.04px;font-size:12px;font-weight:400;color:#222;">Import From</div>
<div class="t" style="left:506.00px;top:155.04px;font-size:12px;font-weight:400;color:#222;transform:scaleX(1.0054);transform-origin:0 0;">Document</div>
<div class="t" style="left:583.85px;top:141.04px;font-size:12px;font-weight:400;color:#222;transform:scaleX(0.9388);transform-origin:0 0;">Link To</div>
<div class="t" style="left:574.30px;top:155.04px;font-size:12px;font-weight:400;color:#222;transform:scaleX(1.0054);transform-origin:0 0;">Document</div>
<div class="t" style="left:655.50px;top:107.24px;font-size:12px;font-weight:400;color:#222;transform:scaleX(0.9674);transform-origin:0 0;">From Library</div>
<div class="t" style="left:655.50px;top:130.44px;font-size:12px;font-weight:400;color:#222;transform:scaleX(0.9548);transform-origin:0 0;">From Any Process</div>
<div class="t" style="left:655.50px;top:153.54px;font-size:12px;font-weight:400;color:#222;transform:scaleX(0.9215);transform-origin:0 0;">From URL</div>
<div class="t" style="left:592.00px;top:174.24px;font-size:12px;font-weight:400;color:#222;transform:scaleX(0.9794);transform-origin:0 0;">Add Element</div>
<div class="t" style="left:762.70px;top:141.34px;font-size:12px;font-weight:400;color:#222;transform:scaleX(0.9514);transform-origin:0 0;">Delete</div>
<div class="t" style="left:803.60px;top:141.34px;font-size:12px;font-weight:400;color:#222;transform:scaleX(0.9605);transform-origin:0 0;">Mark as</div>
<div class="t" style="left:804.10px;top:155.04px;font-size:12px;font-weight:400;color:#222;transform:scaleX(0.9675);transform-origin:0 0;">Primary</div>
<div class="t" style="left:771.00px;top:174.14px;font-size:12px;font-weight:400;color:#222;transform:scaleX(0.9626);transform-origin:0 0;">Edit Element</div>
<div class="t" style="left:1265.10px;top:127.34px;font-size:12px;font-weight:400;color:#111;transform:scaleX(0.9956);transform-origin:0 0;">Material</div>
<div class="t" style="left:1265.10px;top:143.14px;font-size:12px;font-weight:400;color:#111;transform:scaleX(0.9407);transform-origin:0 0;">Setup</div>
<div class="t" style="left:1325.40px;top:127.34px;font-size:12px;font-weight:400;color:#111;transform:scaleX(0.9739);transform-origin:0 0;">Entry / Exit</div>
<div class="t" style="left:1399.70px;top:127.34px;font-size:12px;font-weight:400;color:#111;transform:scaleX(0.8995);transform-origin:0 0;">Recipes</div>
<div class="t" style="left:388.70px;top:271.64px;font-size:18.5px;font-weight:400;color:#444;transform:scaleX(0.8675);transform-origin:0 0;">Settings</div>
<div class="t" style="left:390.40px;top:304.34px;font-size:12px;font-weight:400;color:#3b3b3b;transform:scaleX(0.8771);transform-origin:0 0;">Basics</div>
<div class="t" style="left:440.70px;top:304.34px;font-size:12px;font-weight:400;color:#3b3b3b;transform:scaleX(0.9660);transform-origin:0 0;">Packout Settings</div>
<div class="t" style="left:393.90px;top:338.24px;font-size:12px;font-weight:400;color:#3b3b3b;transform:scaleX(0.9433);transform-origin:0 0;">Name</div>
<div class="t" style="left:393.20px;top:367.74px;font-size:12px;font-weight:400;color:#3b3b3b;transform:scaleX(0.9919);transform-origin:0 0;">Operator Interface Template</div>
<div class="t" style="left:393.20px;top:393.84px;font-size:12px;font-weight:400;color:#3b3b3b;transform:scaleX(0.9884);transform-origin:0 0;">Assigned Workstation</div>
<div class="t" style="left:550.30px;top:341.14px;font-size:12px;font-weight:400;color:#3b3b3b;transform:scaleX(0.9539);transform-origin:0 0;">Packout Step #1</div>
<div class="t" style="left:550.30px;top:366.94px;font-size:12px;font-weight:400;color:#3b3b3b;transform:scaleX(0.9755);transform-origin:0 0;">Sales Apps Demo Default</div>
<div class="t" style="left:550.30px;top:393.14px;font-size:12px;font-weight:400;color:#3b3b3b;transform:scaleX(0.9757);transform-origin:0 0;">Select Workstation</div>
<div class="t" style="left:562.20px;top:419.44px;font-size:12px;font-weight:400;color:#3b3b3b;transform:scaleX(0.9943);transform-origin:0 0;">Any Order Mode (Activities can be viewed in any order)</div>
<div class="t" style="left:562.20px;top:444.74px;font-size:12px;font-weight:400;color:#3b3b3b;transform:scaleX(0.9348);transform-origin:0 0;">Is Step Required?</div>
<div class="t" style="left:562.20px;top:485.94px;font-size:12px;font-weight:400;color:#3b3b3b;transform:scaleX(1.0077);transform-origin:0 0;">Activities may be executed without starting a unit</div>
<div class="t" style="left:393.40px;top:512.14px;font-size:12px;font-weight:400;color:#111;transform:scaleX(0.9445);transform-origin:0 0;">Frequency:</div>
<div class="t" style="left:550.50px;top:512.34px;font-size:12px;font-weight:400;color:#3b3b3b;transform:scaleX(0.9397);transform-origin:0 0;">Every Item</div>
<div class="t" style="left:395.00px;top:556.84px;font-size:12px;font-weight:400;color:#3b3b3b;transform:scaleX(0.9838);transform-origin:0 0;">Activity Tracking</div>
<div class="t" style="left:564.80px;top:559.64px;font-size:12px;font-weight:400;color:#3b3b3b;transform:scaleX(0.9497);transform-origin:0 0;">By Current User</div>
<div class="t" style="left:564.80px;top:585.64px;font-size:12px;font-weight:400;color:#3b3b3b;transform:scaleX(0.9514);transform-origin:0 0;">By User Group</div>
<div class="t" style="left:564.80px;top:611.44px;font-size:12px;font-weight:400;color:#3b3b3b;transform:scaleX(0.9266);transform-origin:0 0;">By User Role</div>
<div class="t" style="left:564.80px;top:637.64px;font-size:12px;font-weight:400;color:#3b3b3b;transform:scaleX(1.0102);transform-origin:0 0;">No</div>
<div class="t" style="left:576.30px;top:666.80px;font-size:13px;font-weight:400;color:#474747;transform:scaleX(1.0274);transform-origin:0 0;">Activity Completion Acknowledgement</div>
<div class="t" style="left:576.30px;top:701.94px;font-size:12px;font-weight:400;color:#3b3b3b;transform:scaleX(1.0111);transform-origin:0 0;">Add Acknowledgement to:</div>
<div class="t" style="left:725.20px;top:702.74px;font-size:12px;font-weight:400;color:#3b3b3b;">All Activities</div>
<div class="t" style="left:576.30px;top:736.20px;font-size:13px;font-weight:400;color:#474747;transform:scaleX(1.0102);transform-origin:0 0;">Do you want to require credentials?</div>
<div class="t" style="left:594.00px;top:771.34px;font-size:12px;font-weight:400;color:#3b3b3b;transform:scaleX(0.8683);transform-origin:0 0;">Yes</div>
<div class="t" style="left:594.00px;top:797.14px;font-size:12px;font-weight:400;color:#3b3b3b;transform:scaleX(1.0102);transform-origin:0 0;">No</div>
<div class="t" style="left:395.00px;top:840.04px;font-size:12px;font-weight:400;color:#3b3b3b;transform:scaleX(0.9601);transform-origin:0 0;">Approval Process:</div>
<div class="t" style="left:564.80px;top:843.54px;font-size:12px;font-weight:400;color:#3b3b3b;transform:scaleX(0.8683);transform-origin:0 0;">Yes</div>
<div class="t" style="left:564.80px;top:869.14px;font-size:12px;font-weight:400;color:#3b3b3b;transform:scaleX(1.0102);transform-origin:0 0;">No</div>
<div class="t" style="left:1359.75px;top:925.42px;font-size:12.5px;font-weight:400;color:#3a3a3a;transform:scaleX(0.8581);transform-origin:0 0;">OK</div>
</body></html>
